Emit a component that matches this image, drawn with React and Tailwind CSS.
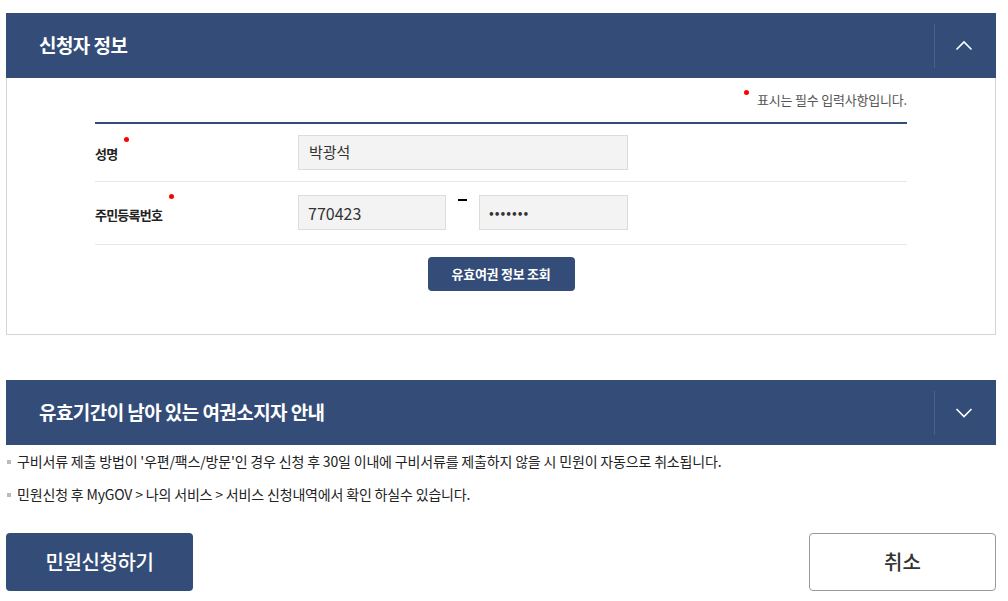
import React from 'react';

const FONT = { fontFamily: '"Noto Sans CJK KR", "Noto Sans", sans-serif' };

const SectionHeader = ({ title, open }) => (
  <div className="flex h-[65px] items-center bg-[#344c78] text-white">
    <h2 className="flex-1 pl-[33px] text-[19px] font-bold tracking-[-0.03em]">{title}</h2>
    <div className="flex h-[44px] w-[62px] items-center justify-center border-l border-[#4a6089] pr-[4px]">
      <svg width="18" height="18" viewBox="0 0 18 18" fill="none" stroke="white" strokeWidth="1.6">
        {open ? <path d="M1.5 12.5 L9 5 L16.5 12.5" /> : <path d="M1.5 5 L9 12.5 L16.5 5" />}
      </svg>
    </div>
  </div>
);

const Dot = ({ className }) => <span className={`absolute h-[5px] w-[5px] rounded-full bg-[#f00] ${className}`} />;

const App = () => {
  return (
    <div style={FONT} className="h-[601px] w-[1008px] overflow-hidden bg-white pt-[13px] pl-[6px] pr-[12px] text-[#222]">
      {/* 신청자 정보 */}
      <SectionHeader title="신청자 정보" open />
      <div className="h-[257px] border border-t-0 border-[#d5d5d5] px-[88px]">
        <div className="flex justify-end pt-[12px]">
          <p className="relative pl-[13px] text-[13px] tracking-[-0.015em] text-[#555]">
            <Dot className="left-0 top-[0px]" />
            표시는 필수 입력사항입니다.
          </p>
        </div>
        <div className="mt-[12px] border-t-2 border-[#344c78]">
          <div className="flex h-[58px] items-center border-b border-[#e6e6e6]">
            <div className="relative w-[203px] pt-[4px] text-[13px] font-bold tracking-[-0.06em]">
              성명
              <Dot className="left-[29px] top-[-3px]" />
            </div>
            <div className="flex h-[35px] w-[330px] items-center border border-[#dcdcdc] bg-[#f3f3f3] px-[10px] text-[15px] text-[#333]">박광석</div>
          </div>
          <div className="flex h-[63px] items-center border-b border-[#e6e6e6]">
            <div className="relative w-[203px] pt-[4px] text-[13px] font-bold tracking-[-0.06em]">
              주민등록번호
              <Dot className="left-[74px] top-[-7px]" />
            </div>
            <div className="flex h-[35px] w-[148px] items-center border border-[#dcdcdc] bg-[#f3f3f3] px-[9px] text-[16px] text-[#333]">770423</div>
            <div className="flex h-[35px] w-[33px] items-start justify-center pt-[4px]">
              <span className="h-[2px] w-[9px] bg-black" />
            </div>
            <div className="flex h-[35px] w-[149px] items-center border border-[#dcdcdc] bg-[#f3f3f3] px-[9px] text-[14px] tracking-[1px] text-[#333]">•••••••</div>
          </div>
        </div>
        <div className="flex justify-center pt-[12px]">
          <button className="h-[34px] w-[147px] rounded-[4px] bg-[#344c78] text-[13px] font-bold tracking-[-0.02em] text-white">유효여권 정보 조회</button>
        </div>
      </div>

      {/* 안내 */}
      <div className="mt-[45px]">
        <SectionHeader title="유효기간이 남아 있는 여권소지자 안내" open={false} />
      </div>
      <ul className="pt-[6px] text-[14px] tracking-[-0.012em] text-[#222]">
        <li className="flex h-[21px] items-center">
          <span className="mr-[6px] ml-[1px] h-[4px] w-[4px] bg-[#bbb]" />
          구비서류 제출 방법이 '우편/팩스/방문'인 경우 신청 후 30일 이내에 구비서류를 제출하지 않을 시 민원이 자동으로 취소됩니다.
        </li>
        <li className="mt-[12px] flex h-[21px] items-center">
          <span className="mr-[6px] ml-[1px] h-[4px] w-[4px] bg-[#bbb]" />
          민원신청 후 MyGOV &gt; 나의 서비스 &gt; 서비스 신청내역에서 확인 하실수 있습니다.
        </li>
      </ul>

      <div className="mt-[28px] flex justify-between">
        <button className="h-[58px] w-[187px] rounded-[4px] bg-[#344c78] text-[20px] font-medium tracking-[-0.02em] text-white">민원신청하기</button>
        <button className="h-[58px] w-[187px] rounded-[4px] border border-[#999] bg-white text-[20px] font-medium text-[#333]">취소</button>
      </div>
    </div>
  );
};

export default App;
